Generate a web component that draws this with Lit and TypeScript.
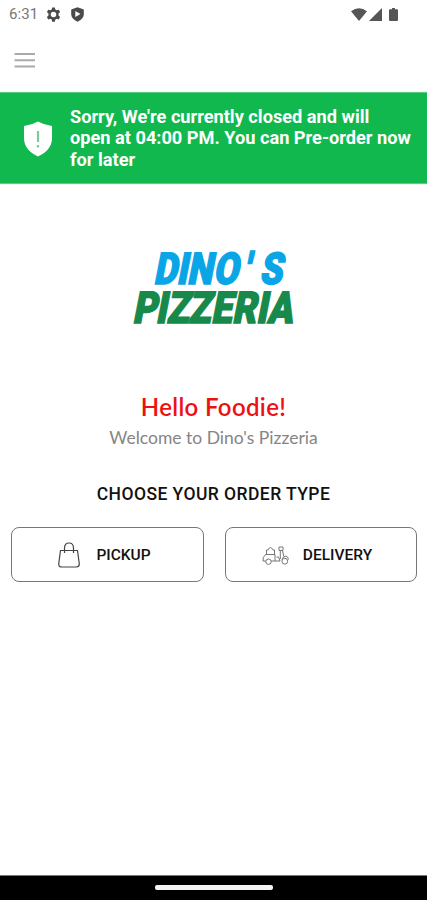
import { LitElement, html, css } from "lit";
import { customElement } from "lit/decorators.js";

@customElement("status-bar")
class StatusBar extends LitElement {
  static styles = css`
    :host { display: flex; height: 28px; box-sizing: border-box; align-items: center; padding: 0 29px 0 9px; }
    .time { font: 400 15px/28px Roboto, sans-serif; color: #777; width: 37px; letter-spacing: 0.1px; }
    svg { display: block; flex: none; }
    .shield { margin-left: 10px; }
    .spacer { flex: 1; }
    .signal { margin-left: 2px; }
    .battery { margin-left: 7px; }
  `;
  render() {
    return html`
      <span class="time">6:31</span>
      <svg width="15" height="15" viewBox="2 2 20 20" fill="#4a4a4a"><path fill-rule="evenodd" d="M10.200 2.500h3.600l.6 2.800 1.900 1.100 2.700-.9 1.800 3.100-2.100 1.900v2.900l2.100 1.900-1.800 3.200-2.700-.9-1.900 1.100-.6 2.800h-3.600l-.6-2.800-1.900-1.100-2.700.9-1.800-3.200 2.100-1.900v-2.900L3.200 8.600 5 5.500l2.700.9 1.900-1.100zM12 8.300a3.700 3.700 0 1 0 0 7.400 3.700 3.700 0 0 0 0-7.400z"/></svg>
      <svg class="shield" width="13" height="15" viewBox="0 0 13 15"><path d="M6.500.3 12.800 2.500V7.500Q12.400 12 6.500 14.700.6 12 .2 7.500V2.500z" fill="#4a4a4a"/><path d="M4.300 4v6l5.200-3z" fill="#fff"/></svg>
      <span class="spacer"></span>
      <svg width="16" height="13" viewBox="0 0 16 13"><path d="M0 3.200Q8-2.500 16 3.200L8 13z" fill="#555"/></svg>
      <svg class="signal" width="13" height="13" viewBox="0 0 13 13"><path d="M13 0V13H0z" fill="#555"/></svg>
      <svg class="battery" width="9" height="13" viewBox="0 0 9 13"><path d="M3 0h3v1.300h2q1 0 1 1V12q0 1-1 1H1q-1 0-1-1V2.300q0-1 1-1h2z" fill="#555"/></svg>
    `;
  }
}

@customElement("closed-banner")
class ClosedBanner extends LitElement {
  static styles = css`
    :host { display: flex; align-items: center; height: 92px; box-sizing: border-box; background: #11b84e; padding-left: 23px; border-top: 1px solid #58cc83; border-bottom: 1px solid #58cc83; }
    svg { flex: none; margin-top: 2px; }
    p { margin: 0 0 0 17px; font: 700 18.2px/21.2px Roboto, sans-serif; color: #fff; white-space: nowrap; }
  `;
  render() {
    return html`
      <svg width="30" height="36" viewBox="0 0 30 36"><path d="M15 .5Q21 4 29 5V17Q29 29 15 35.500 1 29 1 17V5Q9 4 15 .5z" fill="#fff"/><path d="M15 10v11M15 24v2.500" stroke="#7ccb93" stroke-width="2.200"/></svg>
      <p>Sorry, We're currently closed and will<br />open at 04:00 PM. You can Pre-order now<br />for later</p>
    `;
  }
}

@customElement("app-root")
class AppRoot extends LitElement {
  static styles = css`
    :host { display: flex; flex-direction: column; height: 900px; width: 427px; background: #fff; overflow: hidden; }
    .top { height: 64px; box-sizing: border-box; padding: 24px 0 0 14px; border-bottom: 1px solid #f5f5f5; }
    svg { display: block; }
    main { flex: 1; display: flex; flex-direction: column; align-items: center; border-top: 1px solid #f3eef5; }
    .logo { margin-top: 60px; overflow: visible; }
    .logo text { font-family: Roboto, sans-serif; font-weight: 900; font-size: 44px; stroke-width: 1.6; stroke-linejoin: miter; }
    .blue { fill: #0aa5e6; stroke: #0aa5e6; }
    .green { fill: #17894b; stroke: #17894b; }
    h1 { margin: 63px 0 0; font: 600 24px/30px Lato, sans-serif; letter-spacing: 0.35px; color: #ee1111; white-space: nowrap; }
    .welcome { margin: 4px 0 0; font: 400 17.5px/24px Lato, sans-serif; color: #858585; white-space: nowrap; }
    h2 { margin: 32px 0 0; font: 500 17.5px/24px Roboto, sans-serif; letter-spacing: 0.43px; color: #111; white-space: nowrap; }
    .choices { display: grid; grid-template-columns: 193px 192px; gap: 21px; margin-top: 21px; align-self: stretch; padding: 0 10px 0 11px; }
    button { box-sizing: border-box; height: 55px; padding: 1px 6px 0 0; background: #fff; border: 1px solid #777; border-radius: 8px; display: flex; align-items: center; justify-content: center; font: 500 15.5px/20px Roboto, sans-serif; color: #111; }
    .delivery { padding-right: 8px; }
    .bag { margin-right: 16px; }
    .scooter { margin-right: 14px; }
    .nav { height: 25px; background: #000; border-top: 1px solid #777; box-sizing: border-box; display: flex; justify-content: center; padding-top: 9px; }
    .handle { width: 118px; height: 5px; border-radius: 2px; background: #f4f4f4; }
  `;
  render() {
    return html`
      <status-bar></status-bar>
      <div class="top">
        <svg width="22" height="17" viewBox="0 0 22 17"><path d="M.5 2h20.500M.5 8.200h20.500M.5 14.500h20.500" stroke="#aaa" stroke-width="2"/></svg>
      </div>
      <closed-banner></closed-banner>
      <main>
        <svg class="logo" width="167" height="84" viewBox="130 246 167 84">
          <g transform="translate(154 285.200) skewX(-11) scale(.82 1)"><text class="blue" x="-1 27 40 72 109 128.500">DINO'S</text></g>
          <g transform="translate(133 323.800) skewX(-11) scale(.84 1)"><text class="green" x="-1 26.500 39.500 65.500 92.500 117.500 146 159.500">PIZZERIA</text></g>
        </svg>
        <h1>Hello Foodie!</h1>
        <p class="welcome">Welcome to Dino's Pizzeria</p>
        <h2>CHOOSE YOUR ORDER TYPE</h2>
        <div class="choices">
          <button>
            <svg class="bag" width="22" height="26" viewBox="0 0 22 26" fill="none" stroke="#444" stroke-width="1.200"><path d="M2.500 8.500h17L21.300 22q0 3-3 3H3.700q-3 0-3-3z"/><path d="M6.500 11V6q0-5 4.500-5t4.500 5v5"/></svg>
            PICKUP
          </button>
          <button class="delivery">
            <svg class="scooter" width="27" height="19" viewBox="0 0 27 19" fill="none" stroke="#777" stroke-width="1"><path d="M4.500 8.500V4H6Q8.500-1 11 4H12.500V8.500zM3.500 8.500h9.500V15H1Q.5 11 3.500 8.500zM13 15h5l-1.500-4H14.500M17 1h4v3.500h-4zM18.300 4.500V13M20.500 4.500L21.800 10.500M20 14q.5-3.500 4-4 2 .5 2.500 3.500"/><circle cx="6.500" cy="15.700" r="2.700" fill="#fff"/><circle cx="22.800" cy="15.200" r="2.900" fill="#fff"/></svg>
            DELIVERY
          </button>
        </div>
      </main>
      <div class="nav"><div class="handle"></div></div>
    `;
  }
}
